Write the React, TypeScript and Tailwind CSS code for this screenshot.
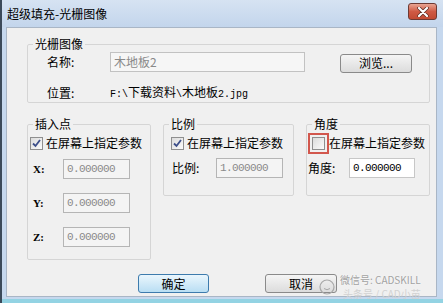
import React from "react";

const cjk = { fontFamily: '"Noto Sans CJK SC", "Liberation Sans", sans-serif' };

function Mono({ children }: { children: React.ReactNode }) {
  return <span className="font-['Liberation_Mono',monospace] text-[10px]">{children}</span>;
}

function CheckBox({ checked }: { checked: boolean }) {
  return (
    <span className="w-[13px] h-[13px] border border-[#8f8f8f] bg-gradient-to-br from-[#dcdcdc] to-[#fbfbfb] flex items-center justify-center shrink-0">
      {checked && (
        <svg width="9" height="9" viewBox="0 0 9 9">
          <path d="M1 4.5 L3.5 7 L8 1" fill="none" stroke="#3d4f8a" strokeWidth="1.8" />
        </svg>
      )}
    </span>
  );
}

function NumBox({ value, enabled }: { value: string; enabled?: boolean }) {
  return (
    <div
      className={
        "h-[20px] border flex items-center pl-[3px] " +
        (enabled ? "w-[66px] bg-white border-[#c7c7c7] text-black" : "w-[67px] bg-[#f4f4f4] border-[#b5b5b5] text-[#8a8a8a]")
      }
    >
      <span className="font-['Liberation_Mono',monospace] text-[11px] tracking-[-0.6px] leading-none">{value}</span>
    </div>
  );
}

function Legend({ children }: { children: React.ReactNode }) {
  return <legend className="ml-[5px] px-[2px] text-[12px] leading-[14px] text-black">{children}</legend>;
}

export default function App() {
  return (
    <div className="w-[443px] h-[303px] flex flex-col bg-[#c6d8ee] border-l-2 border-[#3c4a5a] overflow-hidden relative" style={cjk}>
      {/* title bar */}
      <div className="h-[27px] flex items-center justify-between pl-[5px] pr-[6px] bg-gradient-to-b from-[#d6e3f2] to-[#c3d5ec]">
        <span className="text-[12px] text-black leading-none">超级填充-光栅图像</span>
        <div className="w-[29px] h-[17px] -mt-[4px] rounded-[3px] border border-[#6e3a33] bg-gradient-to-b from-[#e8a493] via-[#cf5a44] to-[#c24a32] flex items-center justify-center">
          <svg width="12" height="10" viewBox="0 0 12 10">
            <path d="M2 1 L10 9 M10 1 L2 9" stroke="#5a2a22" strokeWidth="3.6" strokeLinecap="round" />
            <path d="M2 1 L10 9 M10 1 L2 9" stroke="#ffffff" strokeWidth="2.2" strokeLinecap="round" />
          </svg>
        </div>
      </div>

      {/* client area */}
      <div className="flex-1 ml-[4px] mr-[6px] mb-[6px] bg-[#f0f0f0] border border-[#a9b6c6] flex flex-col">
        <fieldset className="ml-[20px] mt-[9px] w-[403px] border border-[#d5d5d5] rounded-[2px] pb-[1px]">
          <Legend>光栅图像</Legend>
          <div className="pt-[1px] flex items-center h-[21px]">
            <span className="w-[82px] pl-[19px] text-[12px]">名称:</span>
            <div className="w-[195px] h-[20px] border border-[#c2c2c2] bg-[#f6f6f6] flex items-center pl-[3px] text-[12px] text-[#8a8a8a]">
              木地板2
            </div>
            <button className="ml-[35px] w-[72px] h-[19px] mt-[2px] rounded-[3px] border border-[#8a8a8a] bg-gradient-to-b from-[#f5f5f5] to-[#dcdcdc] text-[12px] leading-none flex items-center justify-center">
              浏览...
            </button>
          </div>
          <div className="mt-[12px] h-[17px] flex items-center text-[12px]">
            <span className="w-[82px] pl-[19px]">位置:</span>
            <span>
              <Mono>F:\</Mono>下载资料<Mono>\</Mono>木地板<Mono>2.jpg</Mono>
            </span>
          </div>
        </fieldset>

        <div className="flex items-start mt-[14px] ml-[20px] gap-[12px]">
          <fieldset className="w-[124px] border border-[#d5d5d5] rounded-[2px] pb-[12px]">
            <Legend>插入点</Legend>
            <div className="mt-[5px] h-[14px] flex items-center pl-[2px] gap-[3px] text-[12px]">
              <CheckBox checked />
              <span>在屏幕上指定参数</span>
            </div>
            {["X", "Y", "Z"].map((k, i) => (
              <div key={k} className={"flex items-center " + (i === 0 ? "mt-[9px]" : "mt-[14px]")}>
                <span className="w-[35px] pl-[5px] font-['Liberation_Serif',serif] text-[11px] font-bold">{k}:</span>
                <NumBox value="0.000000" />
              </div>
            ))}
          </fieldset>

          <fieldset className="w-[131px] border border-[#d5d5d5] rounded-[2px] pb-[17px]">
            <Legend>比例</Legend>
            <div className="mt-[5px] h-[14px] flex items-center pl-[7px] gap-[3px] text-[12px]">
              <CheckBox checked />
              <span>在屏幕上指定参数</span>
            </div>
            <div className="mt-[8px] flex items-center">
              <span className="w-[52px] pl-[8px] text-[12px]">比例:</span>
              <NumBox value="1.000000" />
            </div>
          </fieldset>

          <fieldset className="w-[124px] border border-[#d5d5d5] rounded-[2px] pb-[17px]">
            <Legend>角度</Legend>
            <div className="mt-[5px] h-[14px] flex items-center pl-[1px] text-[12px]">
              <span className="border-2 border-[#d2574d] p-[2px] -my-[3px]">
                <CheckBox checked={false} />
              </span>
              <span>在屏幕上指定参数</span>
            </div>
            <div className="mt-[8px] flex items-center">
              <span className="w-[42px] pl-[1px] text-[12px]">角度:</span>
              <NumBox value="0.000000" enabled />
            </div>
          </fieldset>
        </div>

        <div className="flex mt-[14px] ml-[131px] gap-[56px]">
          <button className="w-[71px] h-[19px] rounded-[3px] border border-[#3d7bad] bg-gradient-to-b from-[#eaf6fd] to-[#b9def3] text-[12px] leading-none flex items-center justify-center">
            确定
          </button>
          <button className="w-[72px] h-[19px] rounded-[3px] border border-[#8a8a8a] bg-gradient-to-b from-[#f5f5f5] to-[#dcdcdc] text-[12px] leading-none flex items-center justify-center">
            取消
          </button>
        </div>
      </div>

      {/* watermark overlay */}
      <div className="absolute left-[316px] top-[273px] flex items-center gap-[4px] pointer-events-none">
        <svg width="18" height="18" viewBox="0 0 18 18">
          <circle cx="9" cy="9" r="7" fill="none" stroke="#a8a8a8" strokeWidth="1.2" />
          <path d="M6 10.5 Q9 13 12 10.5" fill="none" stroke="#a8a8a8" strokeWidth="1" />
        </svg>
        <div className="flex flex-col">
          <span className="text-[10px] leading-[14px] text-[#a2a2a2] [text-shadow:0_0_2px_#fff]">微信号: CADSKILL</span>
          <span className="text-[10px] leading-[14px] text-[#d2d2d2] ml-[3px]">头条号 / CAD小苗</span>
        </div>
      </div>
      <div className="absolute left-0 bottom-0 w-full h-[4px] bg-[#93d3e3]" />
    </div>
  );
}
